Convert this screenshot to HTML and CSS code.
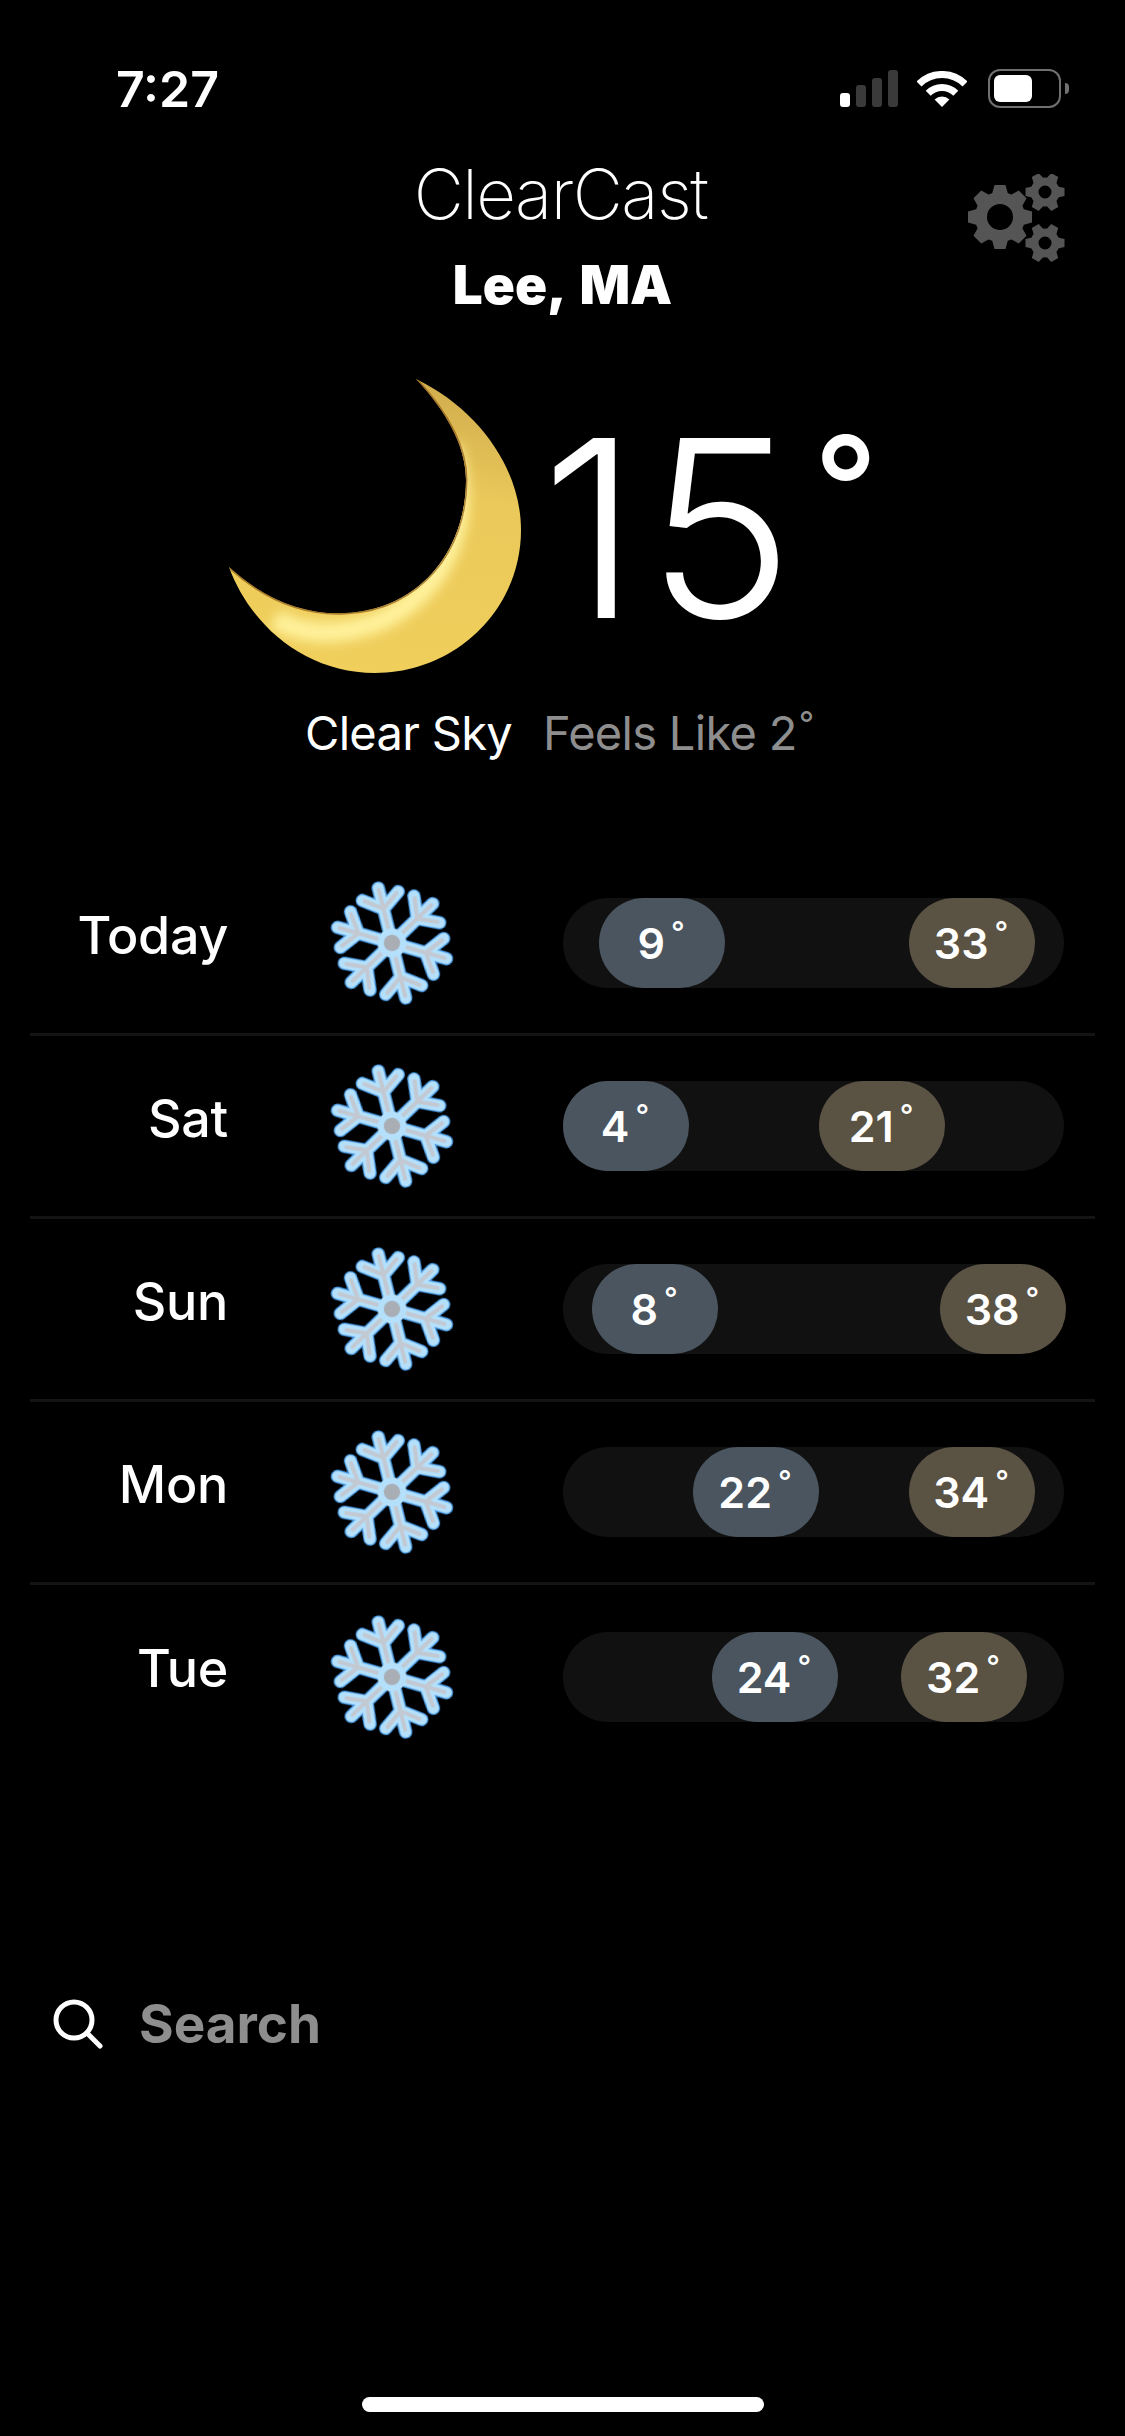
FILE: index.html
```html
<!DOCTYPE html>
<html lang="en">
<head>
    <meta charset="UTF-8">
    <meta name="viewport" content="width=device-width, initial-scale=1.0">
    <title>ClearCast</title>
    <link rel="stylesheet" href="styles.css">
</head>
<body>
    <svg class="defs" width="0" height="0">
        <defs>
            <linearGradient id="moon-fill" x1="0.6" y1="0" x2="0.4" y2="1">
                <stop offset="0" stop-color="#d2ae4e"/>
                <stop offset="0.35" stop-color="#ebc95a"/>
                <stop offset="1" stop-color="#f0cf5c"/>
            </linearGradient>
            <filter id="soft" x="-20%" y="-20%" width="140%" height="140%">
                <feGaussianBlur stdDeviation="6"/>
            </filter>
            <filter id="soften" x="-10%" y="-10%" width="120%" height="120%">
                <feGaussianBlur stdDeviation="0.7"/>
            </filter>
            <clipPath id="moon-clip">
                <path d="M187 0C251 31 292 91 292 151C292 231 226 294 146 294C76 294 21 246 0 188C36 221 76 236 116 234C191 231 237 171 237 101C237 66 216 31 187 0Z"/>
            </clipPath>
            <g id="arm" fill="none" stroke-linecap="round" stroke-linejoin="round">
                <path d="M0 -8L0 -55M0 -34L-18 -47M0 -34L18 -47" stroke="#4a9ee8" stroke-width="13"/>
                <path d="M0 -8L0 -55M0 -34L-18 -47M0 -34L18 -47" stroke="#b4e0fb" stroke-width="10.500"/>
                <path d="M0 -12L0 -53M0 -34L-16 -46M0 -34L16 -46" stroke="#c2c9d2" stroke-width="4"/>
            </g>
            <symbol id="snowflake" viewBox="-66 -66 132 132">
                <g transform="rotate(-14)" filter="url(#soften)">
                    <use href="#arm"/>
                    <use href="#arm" transform="rotate(60)"/>
                    <use href="#arm" transform="rotate(120)"/>
                    <use href="#arm" transform="rotate(180)"/>
                    <use href="#arm" transform="rotate(240)"/>
                    <use href="#arm" transform="rotate(300)"/>
                    <circle r="14" fill="#b4e0fb"/>
                    <circle r="8" fill="#a9aeb5"/>
                </g>
            </symbol>
            <polygon id="tooth-big" points="-8,-23 -5.500,-32 5.500,-32 8,-23"/>
            <polygon id="tooth-small" points="-5.500,-13 -4,-19.500 4,-19.500 5.500,-13"/>
            <g id="gear-small">
                <circle r="10.500" fill="none" stroke="#555" stroke-width="8"/>
                <g fill="#555">
                    <use href="#tooth-small" transform="rotate(30)"/>
                    <use href="#tooth-small" transform="rotate(90)"/>
                    <use href="#tooth-small" transform="rotate(150)"/>
                    <use href="#tooth-small" transform="rotate(210)"/>
                    <use href="#tooth-small" transform="rotate(270)"/>
                    <use href="#tooth-small" transform="rotate(330)"/>
                </g>
            </g>
        </defs>
    </svg>

    <div class="phone">
        <div class="status-bar">
            <span class="time">7:27</span>
            <div class="status-icons">
                <div class="signal">
                    <span class="bar bar-1 on"></span>
                    <span class="bar bar-2"></span>
                    <span class="bar bar-3"></span>
                    <span class="bar bar-4"></span>
                </div>
                <svg class="wifi" width="50" height="36" viewBox="0 0 50 36">
                    <path d="M25 36L17.600 28.600A10.500 10.500 0 0 1 32.400 28.600Z" fill="#fff"/>
                    <path d="M11.200 22.200A19.500 19.500 0 0 1 38.800 22.200" fill="none" stroke="#fff" stroke-width="7"/>
                    <path d="M2 13A32.500 32.500 0 0 1 48 13" fill="none" stroke="#fff" stroke-width="7"/>
                </svg>
                <div class="battery">
                    <div class="battery-level"></div>
                </div>
                <div class="battery-nub"></div>
            </div>
        </div>

        <header class="app-header">
            <h1 class="app-name">ClearCast</h1>
            <h2 class="place">Lee, MA</h2>
            <svg class="gears" width="100" height="92" viewBox="0 0 100 92">
                <g transform="translate(32 43)">
                    <circle r="19" fill="none" stroke="#555" stroke-width="12"/>
                    <g fill="#555">
                        <use href="#tooth-big"/>
                        <use href="#tooth-big" transform="rotate(45)"/>
                        <use href="#tooth-big" transform="rotate(90)"/>
                        <use href="#tooth-big" transform="rotate(135)"/>
                        <use href="#tooth-big" transform="rotate(180)"/>
                        <use href="#tooth-big" transform="rotate(225)"/>
                        <use href="#tooth-big" transform="rotate(270)"/>
                        <use href="#tooth-big" transform="rotate(315)"/>
                    </g>
                </g>
                <use href="#gear-small" transform="translate(77 18)"/>
                <use href="#gear-small" transform="translate(77 69)"/>
            </svg>
        </header>

        <section class="now">
            <div class="now-main">
                <svg class="moon" width="292" height="294" viewBox="0 0 292 294">
                    <path d="M187 0C251 31 292 91 292 151C292 231 226 294 146 294C76 294 21 246 0 188C36 221 76 236 116 234C191 231 237 171 237 101C237 66 216 31 187 0Z" fill="url(#moon-fill)"/>
                    <g clip-path="url(#moon-clip)">
                        <path d="M215 60C237 120 220 195 150 232C110 250 70 250 40 232" fill="none" stroke="#fff29c" stroke-width="20" filter="url(#soft)" transform="translate(6 8)"/>
                        <path d="M187 0C216 31 237 66 237 101C237 171 191 231 116 234C76 236 36 221 0 188" fill="none" stroke="#8d5a14" stroke-width="3" stroke-opacity="0.700"/>
                    </g>
                </svg>
                <div class="now-temp">15<span class="now-deg">°</span></div>
            </div>
            <div class="now-caption">
                <span class="sky">Clear Sky</span>
                <span class="feels">Feels Like 2<span class="deg-small">°</span></span>
            </div>
        </section>

        <section class="forecast">
            <div class="day-row">
                <div class="day-name">Today</div>
                <svg class="flake"><use href="#snowflake"/></svg>
                <div class="track">
                    <div class="pill low" style="margin-left: 36px">9<span class="deg">°</span></div>
                    <div class="pill high" style="margin-left: 184px">33<span class="deg">°</span></div>
                </div>
            </div>
            <div class="day-row">
                <div class="day-name">Sat</div>
                <svg class="flake"><use href="#snowflake"/></svg>
                <div class="track">
                    <div class="pill low" style="margin-left: 0px">4<span class="deg">°</span></div>
                    <div class="pill high" style="margin-left: 130px">21<span class="deg">°</span></div>
                </div>
            </div>
            <div class="day-row">
                <div class="day-name">Sun</div>
                <svg class="flake"><use href="#snowflake"/></svg>
                <div class="track">
                    <div class="pill low" style="margin-left: 29px">8<span class="deg">°</span></div>
                    <div class="pill high" style="margin-left: 222px">38<span class="deg">°</span></div>
                </div>
            </div>
            <div class="day-row">
                <div class="day-name">Mon</div>
                <svg class="flake"><use href="#snowflake"/></svg>
                <div class="track">
                    <div class="pill low" style="margin-left: 130px">22<span class="deg">°</span></div>
                    <div class="pill high" style="margin-left: 90px">34<span class="deg">°</span></div>
                </div>
            </div>
            <div class="day-row">
                <div class="day-name">Tue</div>
                <svg class="flake"><use href="#snowflake"/></svg>
                <div class="track">
                    <div class="pill low" style="margin-left: 149px">24<span class="deg">°</span></div>
                    <div class="pill high" style="margin-left: 63px">32<span class="deg">°</span></div>
                </div>
            </div>
        </section>

        <div class="search">
            <svg class="search-icon" width="50" height="50" viewBox="0 0 50 50">
                <circle cx="21" cy="21" r="18" fill="none" stroke="#fff" stroke-width="5"/>
                <path d="M34 34L47 47" stroke="#fff" stroke-width="5" stroke-linecap="round"/>
            </svg>
            <span class="search-label">Search</span>
        </div>

        <div class="home-indicator"></div>
    </div>
</body>
</html>
```

FILE: styles.css
```css
* {
    box-sizing: border-box;
}
body {
    margin: 0;
    background: #000;
    color: #fff;
    font-family: Inter, "Liberation Sans", sans-serif;
}
.defs {
    position: absolute;
}
.phone {
    position: relative;
    width: 1125px;
    height: 2436px;
    overflow: hidden;
    background: #000;
}

/* Status bar */
.status-bar {
    display: flex;
    justify-content: space-between;
    align-items: center;
    height: 37px;
    margin-top: 70px;
    padding: 0 56px 0 116px;
}
.time {
    font-size: 50px;
    font-weight: 600;
    letter-spacing: 0;
}
.status-icons {
    display: flex;
    align-items: center;
}
.signal {
    display: flex;
    align-items: flex-end;
    gap: 6px;
    height: 37px;
    margin-right: 19px;
}
.bar {
    width: 10px;
    background: #3a3a3a;
    border-radius: 3px;
}
.bar.on {
    background: #fff;
}
.bar-1 { height: 14px; }
.bar-2 { height: 22px; }
.bar-3 { height: 29px; }
.bar-4 { height: 37px; }
.battery {
    width: 73px;
    height: 39px;
    margin-left: 21px;
    padding: 4px;
    border: 2px solid #707070;
    border-radius: 12px;
}
.battery-level {
    width: 38px;
    height: 100%;
    background: #fff;
    border-radius: 6px;
}
.battery-nub {
    width: 4px;
    height: 11px;
    margin-left: 4px;
    background: #707070;
    border-radius: 0 6px 6px 0;
}

/* Title */
.app-header {
    position: relative;
    text-align: center;
}
.app-name {
    margin: 52px 0 0;
    padding-right: 4px;
    font-size: 69px;
    font-weight: 200;
    line-height: 70px;
    letter-spacing: -1.5px;
}
.place {
    margin: 26px 0 0;
    font-size: 53px;
    font-weight: 900;
    line-height: 60px;
    word-spacing: 5px;
}
.gears {
    position: absolute;
    top: 15px;
    left: 968px;
}

/* Current conditions */
.now {
    margin-top: 64px;
}
.now-main {
    display: flex;
    align-items: flex-start;
    padding-left: 229px;
}
.now-temp {
    margin-left: 20px;
    font-size: 248px;
    font-weight: 300;
    line-height: 298px;
    letter-spacing: 8px;
    white-space: nowrap;
}
.now-deg {
    position: relative;
    top: -81px;
    margin-left: 12px;
    font-size: 140px;
    font-weight: 500;
    line-height: 0;
    letter-spacing: 0;
}
.now-caption {
    display: flex;
    align-items: baseline;
    gap: 31px;
    margin-top: 28px;
    padding-left: 305px;
    font-size: 47px;
    line-height: 56px;
}
.sky {
    letter-spacing: -0.7px;
}
.feels {
    color: #8e8e8e;
    font-weight: 400;
    letter-spacing: -0.7px;
}
.deg-small {
    position: relative;
    top: -14px;
    margin-left: 2px;
    font-size: 34px;
    line-height: 0;
}

/* Forecast rows */
.forecast {
    margin: 92px 30px 0;
}
.day-row {
    display: flex;
    align-items: center;
    height: 183px;
    border-bottom: 3px solid #141414;
}
.day-row:last-child {
    border-bottom: none;
}
.day-name {
    width: 198px;
    margin-top: -16px;
    font-size: 52px;
    font-weight: 500;
    letter-spacing: -0.3px;
    text-align: right;
}
.flake {
    width: 136px;
    height: 136px;
    margin-left: 96px;
}
.track {
    display: flex;
    width: 501px;
    height: 90px;
    margin-left: 103px;
    background: #111;
    border-radius: 45px;
}
.pill {
    display: flex;
    justify-content: center;
    align-items: center;
    flex: none;
    width: 126px;
    height: 90px;
    padding-right: 2px;
    border-radius: 45px;
    font-size: 43px;
    font-weight: 600;
}
.pill.low {
    background: #4a5560;
}
.pill.high {
    background: #5a5243;
}
.deg {
    align-self: flex-start;
    margin: 19px 0 0 6px;
    font-size: 30px;
    font-weight: 500;
    line-height: 30px;
}

/* Search */
.search {
    display: flex;
    align-items: center;
    gap: 36px;
    margin-top: 224px;
    padding-left: 53px;
}
.search-label {
    color: #8e8e8e;
    font-size: 53px;
    font-weight: 700;
}

.home-indicator {
    position: absolute;
    left: 362px;
    top: 2397px;
    width: 402px;
    height: 15px;
    background: #fff;
    border-radius: 8px;
}
```
